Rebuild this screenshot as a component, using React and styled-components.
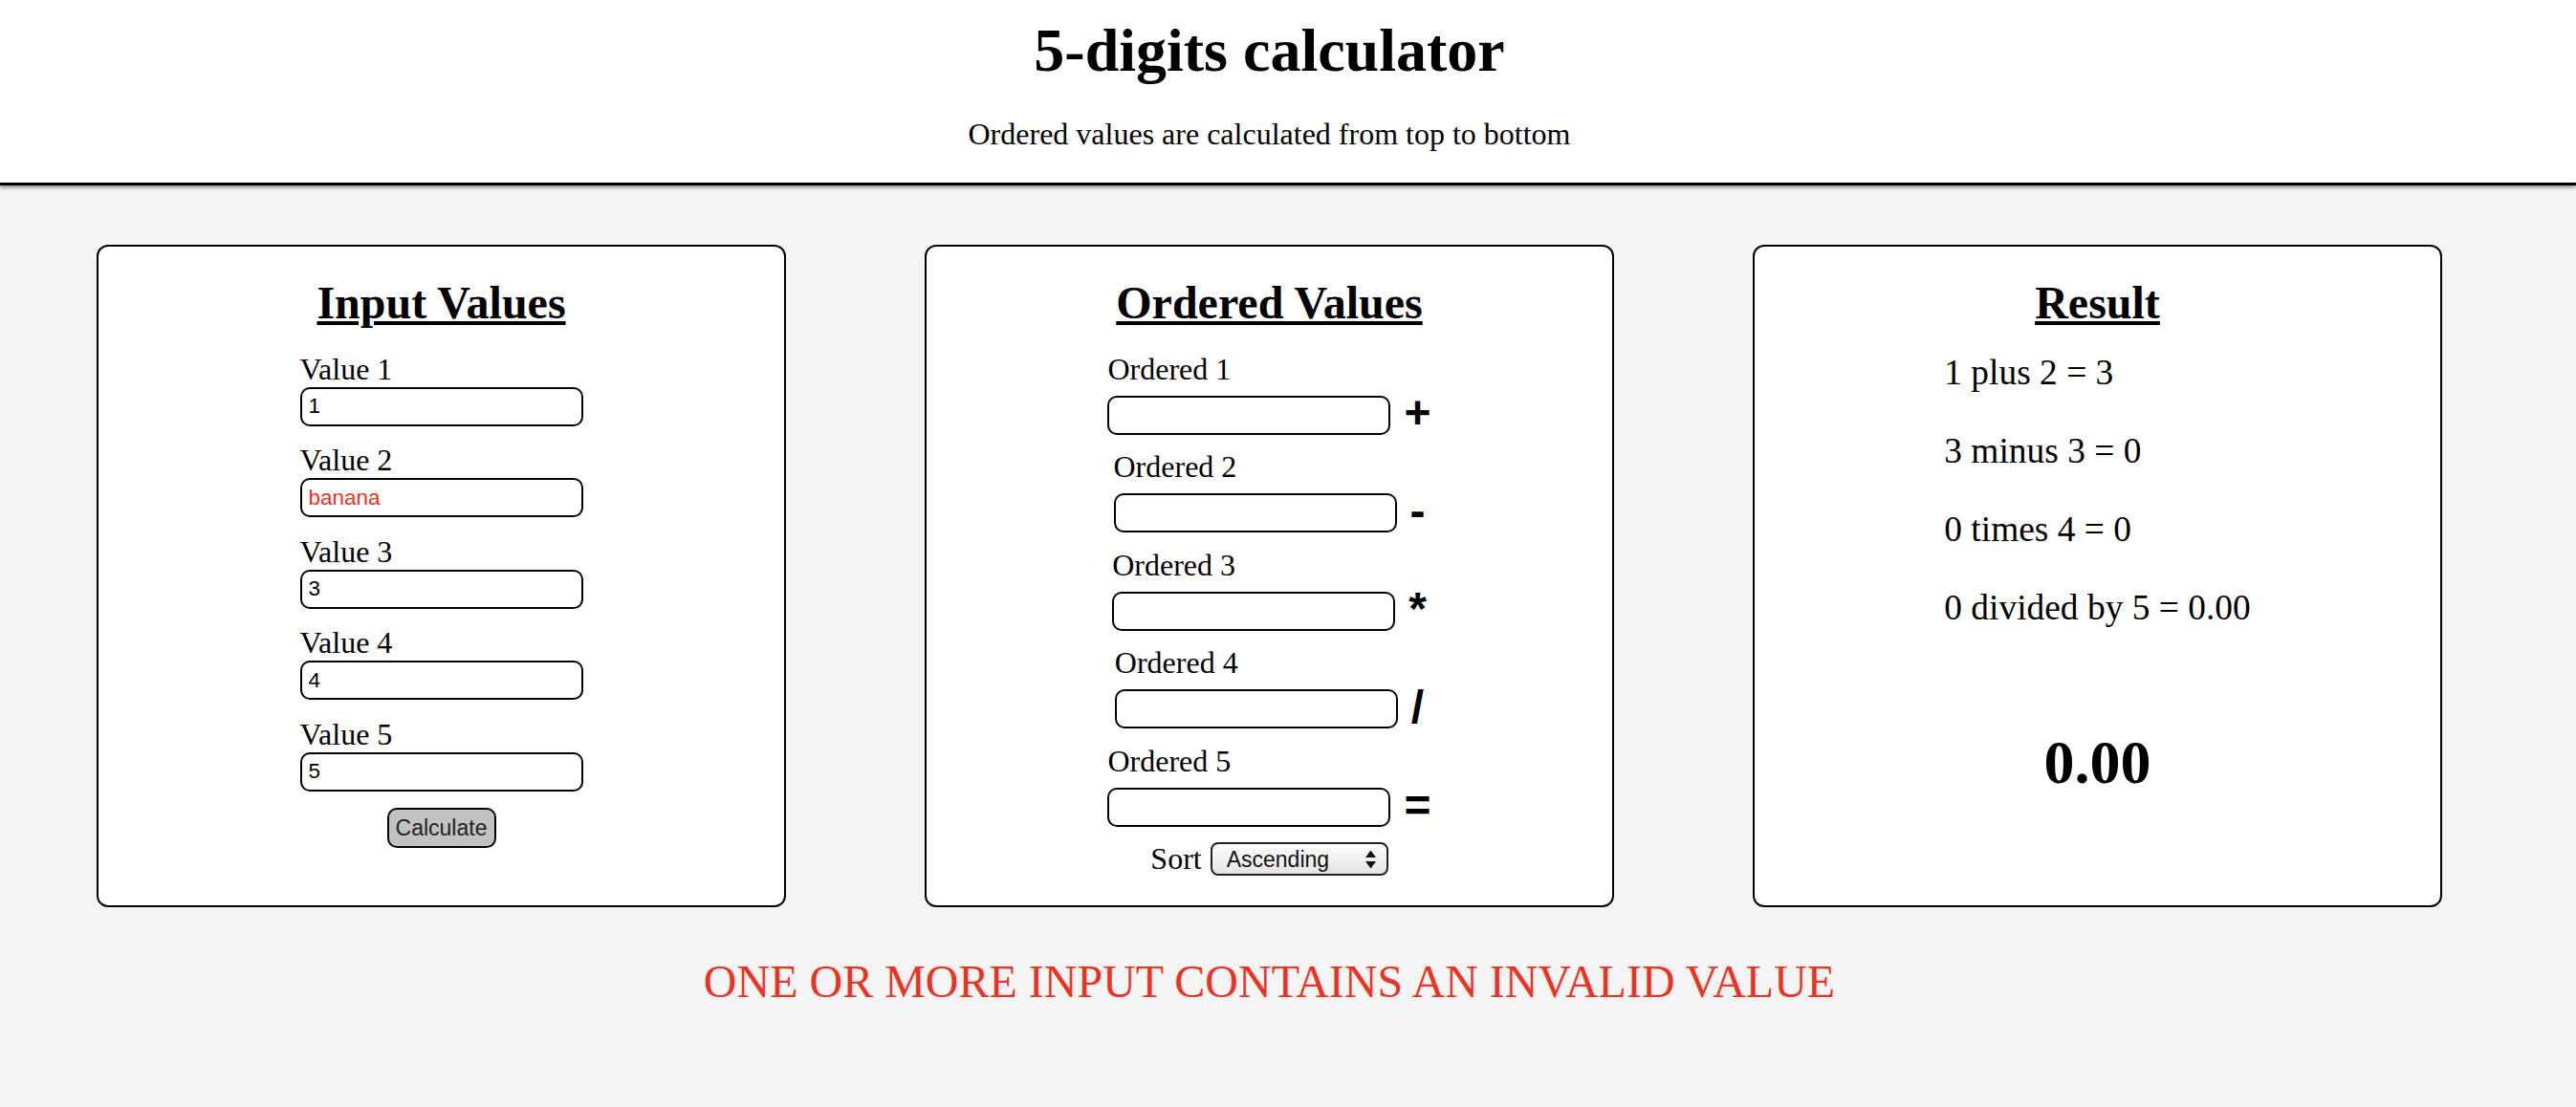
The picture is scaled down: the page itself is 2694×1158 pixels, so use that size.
import styled, { createGlobalStyle } from "styled-components";

const GlobalStyle = createGlobalStyle`
  html, body {
    margin: 0;
    padding: 0;
    background-color: #f4f4f4;
    font-family: "Liberation Serif", "Times New Roman", serif;
    color: #000;
  }
`;

const Page = styled.div`
  min-height: 100vh;
  background-color: #f4f4f4;
`;

const Header = styled.header`
  background-color: #fff;
  text-align: center;
  padding: 16px 39px 32px 0;
  border-bottom: 3px solid #000;
  box-shadow: 0 2px 4px rgba(0, 0, 0, 0.45);
`;

const Title = styled.h1`
  margin: 0;
  font-size: 64px;
  font-weight: bold;
`;

const Subtitle = styled.p`
  margin: 32px 0 0;
  font-size: 32px;
`;

const Main = styled.main`
  padding: 62px 140px 0 101px;
`;

const Cards = styled.div`
  display: flex;
  gap: 145px;
`;

const Card = styled.section`
  width: 721px;
  height: 693px;
  box-sizing: border-box;
  border: 2px solid #000;
  border-radius: 12px;
  background-color: #fff;
  padding-top: 31px;
  display: flex;
  flex-direction: column;
  align-items: center;
`;

const CardTitle = styled.h2`
  margin: 0 0 23.5px;
  font-size: 48px;
  font-weight: bold;
  text-decoration: underline;
`;

const Field = styled.div`
  display: flex;
  flex-direction: column;
  align-items: flex-start;
  width: 296px;
  margin-bottom: 17.5px;
`;

const Label = styled.label`
  font-size: 32px;
`;

const TextInput = styled.input`
  width: 296px;
  height: 41px;
  box-sizing: border-box;
  border: 2px solid #000;
  border-radius: 10px;
  padding: 0 7px;
  background-color: #fff;
  font-family: "Liberation Sans", Arial, sans-serif;
  font-size: 22.5px;
  color: ${(p) => (p.$invalid ? "#eb3323" : "#000")};
  outline: none;
`;

const CalcButton = styled.button`
  width: 114px;
  height: 42px;
  box-sizing: border-box;
  padding: 0;
  border: 2px solid #000;
  border-radius: 10px;
  background-color: #c2c2c2;
  color: #222;
  font-family: "Liberation Sans", Arial, sans-serif;
  font-size: 23px;
`;

const OrderedRow = styled.div`
  display: flex;
  flex-direction: column;
  align-items: flex-start;
  margin-bottom: 15.4px;
`;

const InputLine = styled.div`
  display: flex;
  align-items: center;
  margin-top: 9.2px;
`;

const Operator = styled.span`
  margin-left: 14px;
  margin-top: -5px;
  font-family: "Liberation Sans", Arial, sans-serif;
  font-size: 48px;
  font-weight: bold;
  line-height: 41px;
`;

const SortRow = styled.div`
  display: flex;
  align-items: center;
  gap: 9px;
`;

const SortLabel = styled.label`
  font-size: 32px;
`;

const SelectWrap = styled.span`
  position: relative;
  display: inline-flex;
`;

const Select = styled.select`
  appearance: none;
  -webkit-appearance: none;
  width: 186px;
  height: 35px;
  box-sizing: border-box;
  border: 2px solid #222;
  border-radius: 8px;
  padding: 0 0 0 15px;
  background: linear-gradient(#ffffff, #e4e4e4);
  font-family: "Liberation Sans", Arial, sans-serif;
  font-size: 23px;
  color: #111;
  outline: none;
`;

const Arrows = styled.svg`
  position: absolute;
  right: 13px;
  top: 50%;
  transform: translateY(-50%);
  pointer-events: none;
`;

const ResultList = styled.div`
  display: flex;
  flex-direction: column;
  align-items: flex-start;
  gap: 39px;
`;

const ResultLine = styled.p`
  margin: 0;
  font-size: 37.44px;
`;

const Total = styled.div`
  margin-top: 104.5px;
  font-size: 64px;
  font-weight: bold;
`;

const ErrorText = styled.p`
  margin: 50px 0 0;
  text-align: center;
  font-size: 48px;
  color: #eb3323;
`;

const values = ["1", "banana", "3", "4", "5"];
const operators = ["+", "-", "*", "/", "="];
const results = ["1 plus 2 = 3", "3 minus 3 = 0", "0 times 4 = 0", "0 divided by 5 = 0.00"];

export default function App() {
  return (
    <Page>
      <GlobalStyle />
      <Header>
        <Title>5-digits calculator</Title>
        <Subtitle>Ordered values are calculated from top to bottom</Subtitle>
      </Header>
      <Main>
        <Cards>
          <Card>
            <CardTitle>Input Values</CardTitle>
            {values.map((v, i) => (
              <Field key={i}>
                <Label>Value {i + 1}</Label>
                <TextInput defaultValue={v} $invalid={isNaN(Number(v))} />
              </Field>
            ))}
            <CalcButton>Calculate</CalcButton>
          </Card>

          <Card>
            <CardTitle>Ordered Values</CardTitle>
            {operators.map((op, i) => (
              <OrderedRow key={i}>
                <Label>Ordered {i + 1}</Label>
                <InputLine>
                  <TextInput readOnly />
                  <Operator>{op}</Operator>
                </InputLine>
              </OrderedRow>
            ))}
            <SortRow>
              <SortLabel>Sort</SortLabel>
              <SelectWrap>
                <Select defaultValue="asc">
                  <option value="asc">Ascending</option>
                  <option value="desc">Descending</option>
                </Select>
                <Arrows width="11" height="19" viewBox="0 0 11 19">
                  <path d="M5.5 0 L11 7.5 L0 7.5 Z" fill="#111" />
                  <path d="M5.5 19 L11 11.5 L0 11.5 Z" fill="#111" />
                </Arrows>
              </SelectWrap>
            </SortRow>
          </Card>

          <Card>
            <CardTitle>Result</CardTitle>
            <ResultList>
              {results.map((r, i) => (
                <ResultLine key={i}>{r}</ResultLine>
              ))}
            </ResultList>
            <Total>0.00</Total>
          </Card>
        </Cards>
        <ErrorText>ONE OR MORE INPUT CONTAINS AN INVALID VALUE</ErrorText>
      </Main>
    </Page>
  );
}
